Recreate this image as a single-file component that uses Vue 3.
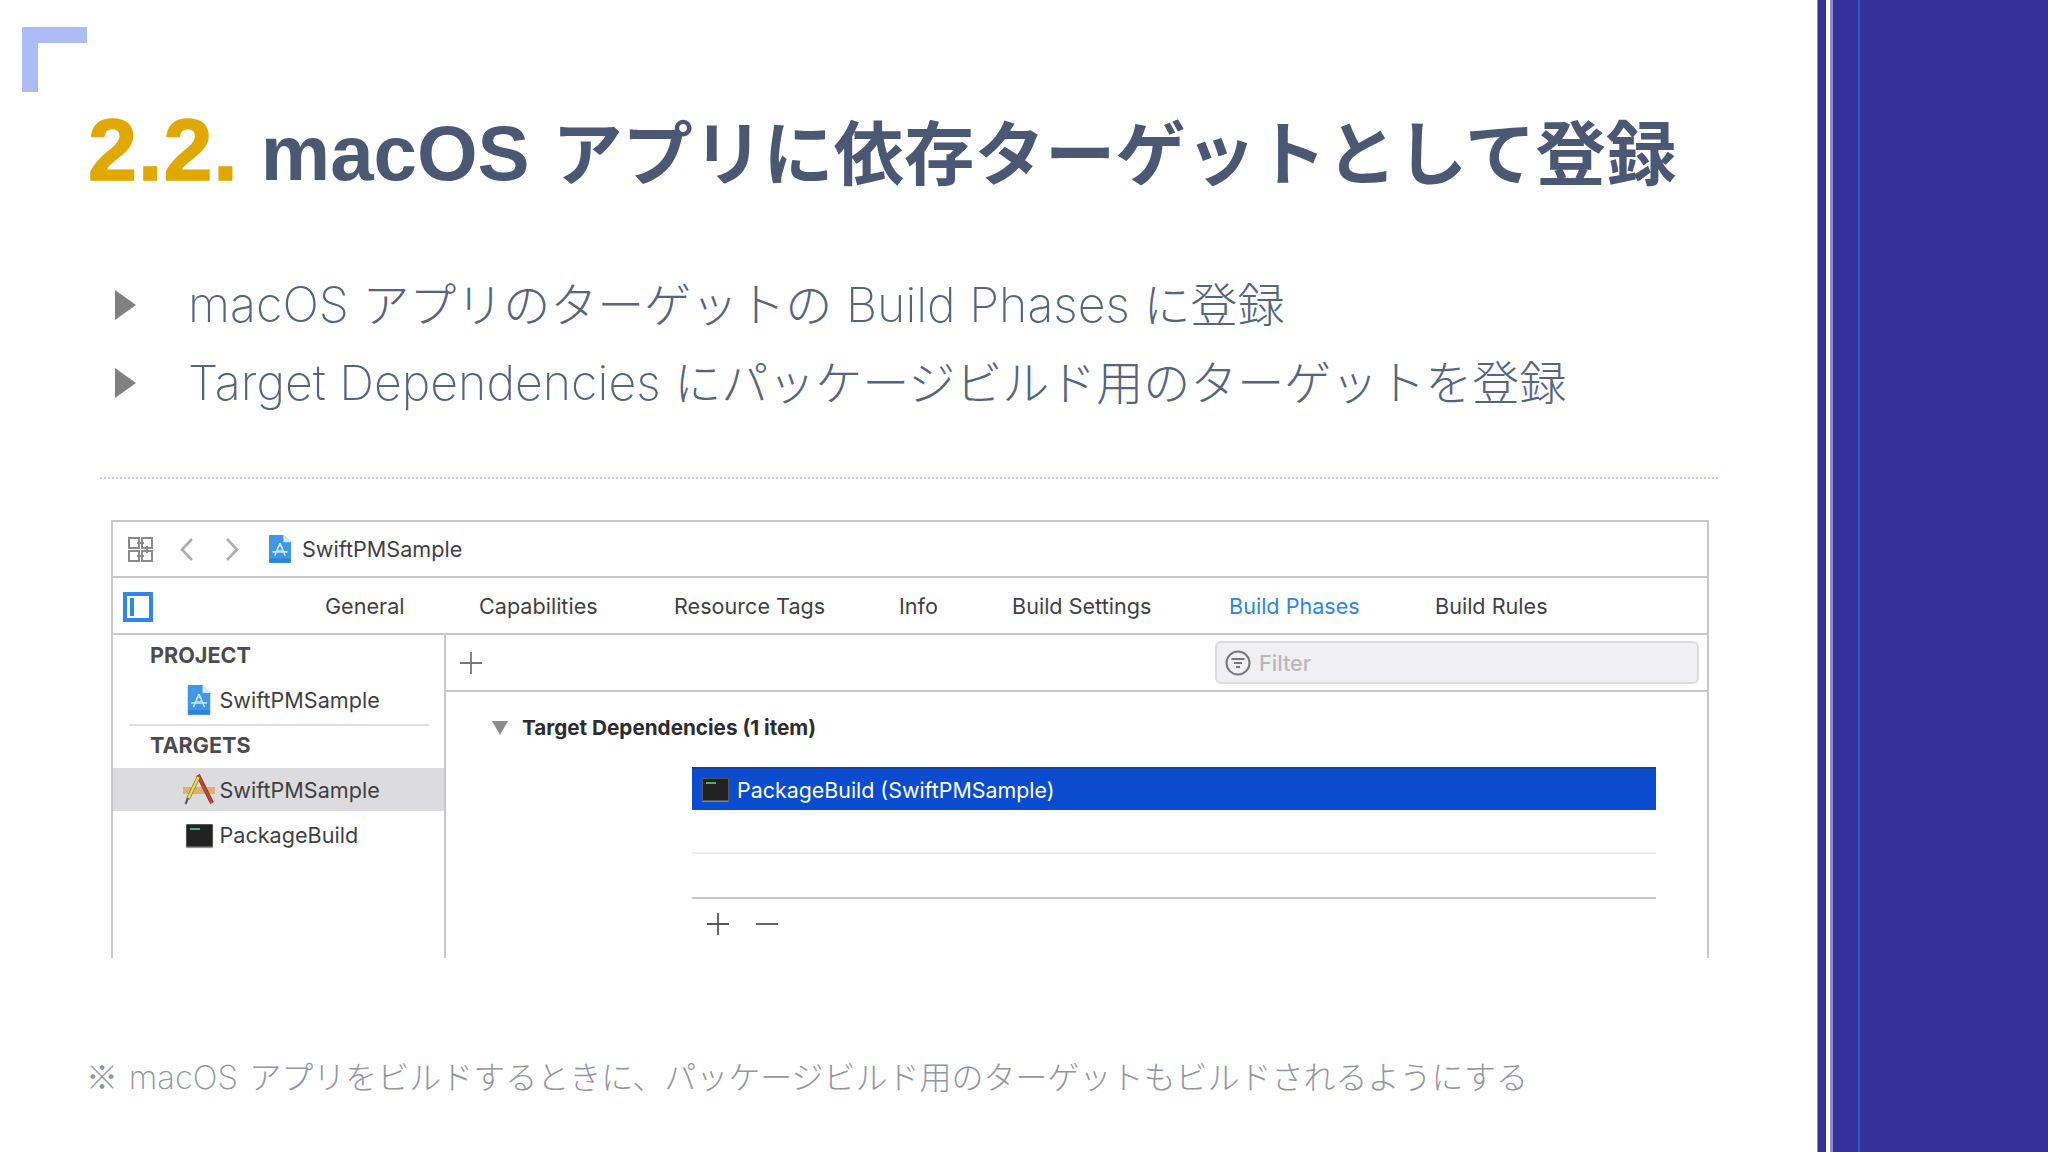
<script setup>
const tabs = [
  { label: 'General', width: 154 },
  { label: 'Capabilities', width: 195 },
  { label: 'Resource Tags', width: 225 },
  { label: 'Info', width: 113 },
  { label: 'Build Settings', width: 217 },
  { label: 'Build Phases', width: 206, active: true },
  { label: 'Build Rules', width: 140 },
]
const bullets = [
  [{ t: 'macOS ', lat: true }, { t: 'アプリのターゲットの' }, { t: ' Build Phases ', lat: true }, { t: 'に登録' }],
  [{ t: 'Target Dependencies ', lat: true }, { t: 'にパッケージビルド用のターゲットを登録' }],
]
</script>

<template>
  <div class="slide">
    <svg class="defs" width="0" height="0">
      <symbol id="proj" viewBox="0 0 23 30">
        <path d="M0 1.500Q0 0 1.500 0H15l8 8v20.500q0 1.500-1.500 1.500h-20Q0 30 0 28.500z" fill="#3f97e6" />
        <path d="M1 25h21v3.500q0 .5-.5.5h-20q-.5 0-.5-.5z" fill="#2f80d8" />
        <path d="M15 0l8 8h-8z" fill="#d6e9fa" />
        <path d="M11.500 9 6 22M11.500 9 17 22M3.500 18h16" stroke="#cfe6fa" stroke-width="1.600" fill="none" />
        <circle cx="11.500" cy="14.500" r="2.500" fill="none" stroke="#cfe6fa" stroke-width="1" />
      </symbol>
    </svg>
    <main class="content">
      <div class="corner"></div>
      <h1 class="title"><span class="num">2.2.</span><span class="lat">macOS</span> アプリに依存ターゲットとして登録</h1>
      <ul class="bullets">
        <li v-for="(b, i) in bullets" :key="i">
          <i class="tri"></i>
          <span class="line"><span v-for="(p, j) in b" :key="j" :class="{ lb: p.lat }">{{ p.t }}</span></span>
        </li>
      </ul>
      <div class="dots"></div>
      <section class="win">
        <div class="bar path">
          <svg width="25" height="25" viewBox="0 0 25 25" fill="none" stroke="#8a8a8a" stroke-width="2">
            <path d="M1 1h10v10H1zM14 1h10v10H14zM1 14h10v10H1zM14 14h10v10H14zM9 6h7M9 19h7M19 9v7" />
          </svg>
          <svg class="chev" width="13" height="23" viewBox="0 0 13 23" fill="none" stroke="#aeaeae" stroke-width="2.600"><path d="M12 1 2 11.500 12 22" /></svg>
          <svg class="chev2" width="13" height="23" viewBox="0 0 13 23" fill="none" stroke="#aeaeae" stroke-width="2.600"><path d="m1 1 10 10.500L1 22" /></svg>
          <svg class="doc" width="22" height="30" viewBox="0 0 23 30"><use href="#proj" /></svg>
          <span class="crumb">SwiftPMSample</span>
        </div>
        <div class="bar tabs">
          <span class="side-toggle"><i></i></span>
          <div class="tab-list">
            <span v-for="t in tabs" :key="t.label" class="tab" :class="{ on: t.active }" :style="{ width: t.width + 'px' }">{{ t.label }}</span>
          </div>
        </div>
        <div class="body">
          <aside class="side">
            <div class="head">PROJECT</div>
            <div class="item">
              <span class="slot"><svg class="m4" width="24" height="30" viewBox="0 0 23 30"><use href="#proj" /></svg></span>
              SwiftPMSample
            </div>
            <div class="rule"></div>
            <div class="head h2">TARGETS</div>
            <div class="item sel">
              <span class="slot">
                <svg width="32" height="31" viewBox="0 0 32 31">
                  <path d="M0 13h32v7H0z" fill="#dcb273" />
                  <path d="M15 1l14 28" stroke="#8f3a2a" stroke-width="4" />
                  <path d="M15 1l14 28" stroke="#b94a32" stroke-width="2.400" />
                  <path d="M15.500 3 5 25" stroke="#8b7a2c" stroke-width="4" />
                  <path d="M15.500 3 5 25" stroke="#f0d94a" stroke-width="2.400" />
                  <path d="M5 24 2.500 30" stroke="#555" stroke-width="2" />
                </svg>
              </span>
              SwiftPMSample
            </div>
            <div class="item item3">
              <span class="slot"><span class="term m3"><i></i></span></span>
              PackageBuild
            </div>
          </aside>
          <div class="pane">
            <div class="pane-bar">
              <svg width="22" height="22" viewBox="0 0 22 22" stroke="#777" stroke-width="1.800"><path d="M11 0v22M0 11h22" /></svg>
              <div class="filter">
                <svg width="26" height="26" viewBox="0 0 26 26" fill="none" stroke="#777" stroke-width="2">
                  <circle cx="13" cy="13" r="11.500" />
                  <path d="M6.500 9h13M9 13h8M11 17h4" />
                </svg>
                <span>Filter</span>
              </div>
            </div>
            <div class="sect">
              <i class="down"></i>
              <strong>Target Dependencies (1 item)</strong>
            </div>
            <div class="table">
              <div class="row">
                <span class="term"><i></i></span>
                <span>PackageBuild (SwiftPMSample)</span>
              </div>
              <div class="empty e1"></div>
              <div class="empty last"></div>
              <div class="tools">
                <svg width="22" height="22" viewBox="0 0 22 22" stroke="#555" stroke-width="1.800"><path d="M11 0v22M0 11h22" /></svg>
                <svg width="22" height="22" viewBox="0 0 22 22" stroke="#555" stroke-width="1.800"><path d="M0 11h22" /></svg>
              </div>
            </div>
          </div>
        </div>
      </section>
      <p class="note">※<span class="nl"> macOS </span>アプリをビルドするときに、パッケージビルド用のターゲットもビルドされるようにする</p>
    </main>
    <aside class="stripe">
      <div class="s1"></div>
      <div class="s2"></div>
      <div class="s3"></div>
      <div class="s4"></div>
      <div class="s5"></div>
    </aside>
  </div>
</template>

<style>
html, body { margin: 0; background: #fff; }
</style>

<style scoped>
.defs { position: absolute; }
.slide {
  width: 2048px; height: 1152px; display: flex; overflow: hidden; background: #fff;
  font-family: "Noto Sans CJK JP", "Noto Sans", sans-serif;
}
.content { width: 1817px; flex: none; position: relative; box-sizing: border-box; }
.corner {
  position: absolute; left: 22px; top: 27px; width: 65px; height: 65px; box-sizing: border-box;
  border-top: 16px solid #adbbf7; border-left: 16px solid #adbbf7;
}
.title {
  margin: 0; padding: 100px 0 0 88px; font-size: 70.4px; line-height: 100px; font-weight: 700;
  color: #4a5874; white-space: nowrap; font-family: "Liberation Sans", "Noto Sans CJK JP", sans-serif;
}
.num { color: #e0a800; font-size: 88px; margin-right: 22px; letter-spacing: 1px; -webkit-text-stroke: 1.5px #e0a800; }
.lat { font-size: 78px; margin-right: 3px; }
.bullets { list-style: none; margin: 60px 0 0; padding: 0 0 0 115px; color: #56647f; font-size: 47px; font-weight: 300; }
.bullets li { display: flex; align-items: center; height: 78px; white-space: nowrap; }
.line { white-space: pre; padding-bottom: 8px; }
.lb { font-family: Inter, sans-serif; font-size: 48.3px; font-weight: 200; }
.tri { width: 0; height: 0; border-left: 21px solid #808080; border-top: 15px solid transparent; border-bottom: 15px solid transparent; margin-right: 52px; }
.dots { margin: 55px 0 0 100px; width: 1618px; border-top: 2px dotted #c9cdf0; }
.win {
  margin: 41px 0 0 111px; width: 1598px; height: 438px; box-sizing: border-box;
  border: solid #c8c8cc; border-width: 2px 2px 0; font-family: Inter, "Liberation Sans", sans-serif;
  font-size: 21.6px; color: #3f3f42; display: flex; flex-direction: column;
}
.bar { border-bottom: 2px solid #c8c8cc; display: flex; align-items: center; flex: none; box-sizing: border-box; }
.path { height: 56px; padding-left: 15px; }
.chev { margin-left: 27px; }
.chev2 { margin-left: 33px; }
.doc { margin-left: 30px; }
.crumb { margin-left: 11px; }
.tabs { height: 57px; padding-left: 10px; }
.side-toggle { width: 30px; height: 30px; box-sizing: border-box; border: 4px solid #2f86ec; display: flex; padding-left: 3px; margin-top: 3px; }
.side-toggle i { width: 4px; background: #2f86ec; margin: 2px 0; }
.tab-list { display: flex; margin-left: 172px; }
.tab { flex: none; white-space: nowrap; }
.tab.on { color: #2f86d8; }
.body { flex: 1; display: flex; min-height: 0; }
.side { width: 331px; flex: none; border-right: 2px solid #c8c8cc; }
.head { font-weight: 700; color: #4b4b4d; height: 41px; line-height: 41px; padding-left: 37px; }
.h2 { height: 42px; line-height: 38px; }
.item { height: 48px; display: flex; align-items: center; padding-left: 70px; }
.slot { width: 36.5px; flex: none; display: flex; align-items: center; }
.m4 { margin-left: 4px; }
.m3 { margin-left: 3px; }
.sel { background: #dcdcde; height: 43px; }
.rule { height: 2px; background: #dedee0; margin: 0 15px 0 16px; }
.term {
  display: block; width: 27px; height: 23px; background: #222; border: 1px solid #555; flex: none;
  border-radius: 1px; box-sizing: border-box; padding: 3px; box-shadow: 0 1px 1px #888;
}
.term i { display: block; width: 10px; height: 2px; background: #4caf6a; }
.pane { flex: 1; min-width: 0; }
.pane-bar { height: 55px; border-bottom: 2px solid #c8c8cc; display: flex; align-items: center; justify-content: space-between; padding: 0 8px 0 14px; }
.filter {
  width: 484px; height: 43px; box-sizing: border-box; border: 2px solid #dcdcde; border-radius: 6px; background: #f0f0f2;
  display: flex; align-items: center; gap: 8px; padding-left: 8px; color: #b8b8ba; font-weight: 500;
}
.sect { display: flex; align-items: center; padding: 0 0 0 46px; height: 71px; color: #2c2c2e; font-size: 20.7px; }
.sect strong { font-weight: 700; margin-left: 14px; }
.down { width: 0; height: 0; border-top: 14px solid #8c8c8c; border-left: 8px solid transparent; border-right: 8px solid transparent; }
.table { margin: 4px 0 0 246px; width: 964px; }
.row {
  height: 43px; background: #0b4bd0; color: #fff; display: flex; align-items: center; gap: 8px; font-size: 21.4px;
  padding-left: 10px; border-top: 2px solid #1244a8; box-sizing: border-box;
}
.empty { height: 43px; border-bottom: 2px solid #ececee; }
.empty.e1 { height: 42px; }
.empty.last { border-bottom-color: #c8c8cc; }
.tools { display: flex; gap: 27px; padding: 14px 0 0 15px; }
.note { margin: 93px 0 0 86px; font-size: 32px; font-weight: 300; color: #93969e; white-space: pre; line-height: 48px; }
.nl { font-family: Inter, sans-serif; font-weight: 200; font-size: 32.8px; margin: 0 2px 0 1.500px; }
.stripe { flex: 1; display: flex; background: #35309a; }
.s1 { width: 9px; background: #35309a; border-left: 1px solid #8b88c6; box-sizing: border-box; }
.s2 { width: 4px; background: #fff; }
.s3 { width: 3px; background: #8e8cc9; }
.s4 { width: 25px; }
.s5 { width: 2px; background: #2f5bc4; }
</style>
